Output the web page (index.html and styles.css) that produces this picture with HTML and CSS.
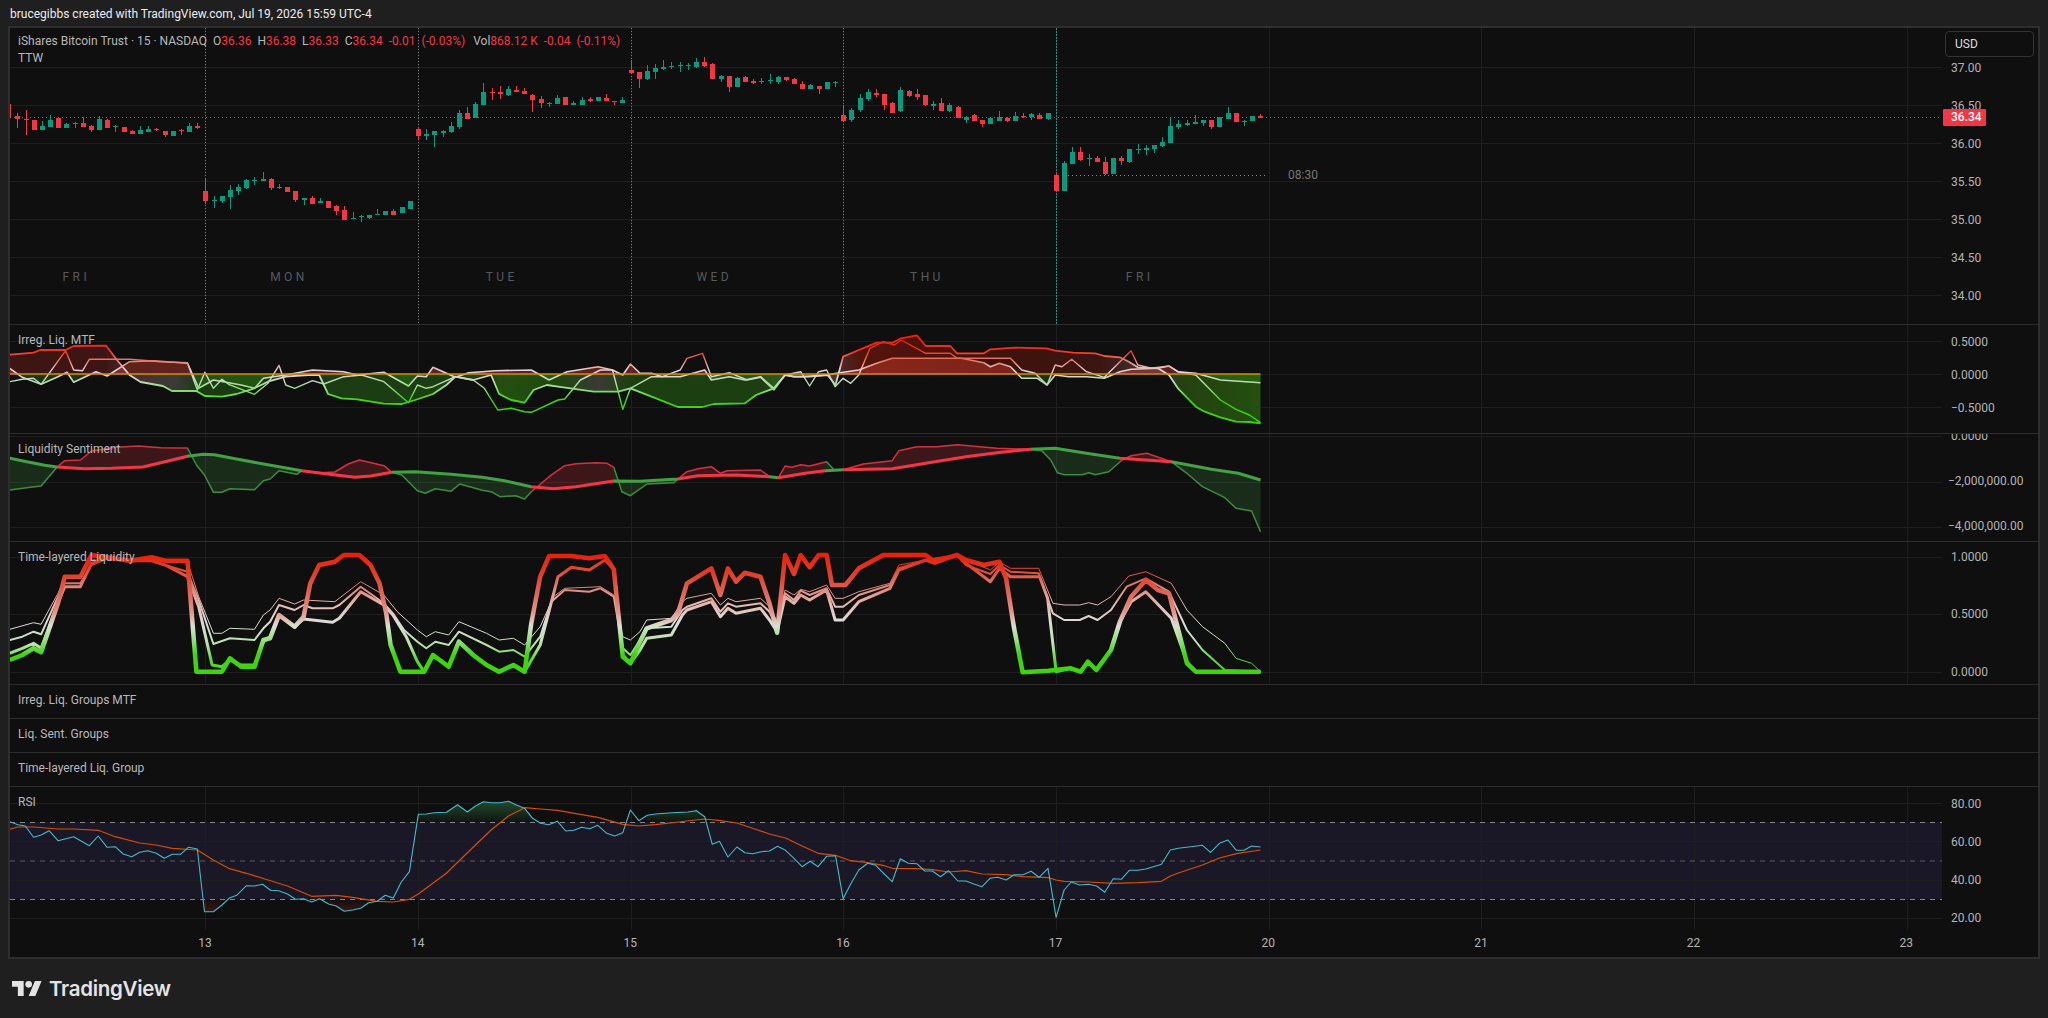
FILE: index.html
```html
<!DOCTYPE html>
<html lang="en">

<head>
  <meta charset="UTF-8">
  <meta name="viewport" content="width=device-width, initial-scale=1.0">
  <title>iShares Bitcoin Trust - TradingView</title>
  <link rel="stylesheet" href="styles.css">
</head>

<body>
  <div class="header">brucegibbs created with TradingView.com, Jul 19, 2026 15:59 UTC-4</div>

  <div class="chart">
    <div class="pane pane-main">
      <div class="plot">
        <svg id="main" class="plot-svg"></svg>
        <div class="legend">
          <div class="legend-row">
            <span class="symbol">iShares Bitcoin Trust · 15 · NASDAQ</span>
            <span class="ohlc">O<b>36.36</b></span>
            <span class="ohlc">H<b>36.38</b></span>
            <span class="ohlc">L<b>36.33</b></span>
            <span class="ohlc">C<b>36.34</b></span>
            <span class="ohlc"><b>-0.01</b></span>
            <span class="ohlc"><b>(-0.03%)</b></span>
            <span class="ohlc vol">Vol<b>868.12 K</b></span>
            <span class="ohlc"><b>-0.04</b></span>
            <span class="ohlc"><b>(-0.11%)</b></span>
          </div>
          <div class="legend-row">TTW</div>
        </div>
        <div class="days">
          <span>FRI</span>
          <span>MON</span>
          <span>TUE</span>
          <span>WED</span>
          <span>THU</span>
          <span>FRI</span>
        </div>
        <div class="open-time">08:30</div>
      </div>
      <div class="axis axis-main">
        <div class="tick">37.00</div>
        <div class="tick">36.50</div>
        <div class="tick">36.00</div>
        <div class="tick">35.50</div>
        <div class="tick">35.00</div>
        <div class="tick">34.50</div>
        <div class="tick">34.00</div>
        <div class="currency">USD</div>
        <div class="last-price">36.34</div>
      </div>
    </div>

    <div class="pane pane-irreg">
      <div class="plot">
        <svg id="irreg" class="plot-svg"></svg>
        <div class="pane-title">Irreg. Liq. MTF</div>
      </div>
      <div class="axis axis-irreg">
        <div class="tick">0.5000</div>
        <div class="tick">0.0000</div>
        <div class="tick">−0.5000</div>
      </div>
    </div>

    <div class="pane pane-sent">
      <div class="plot">
        <svg id="sent" class="plot-svg"></svg>
        <div class="pane-title">Liquidity Sentiment</div>
      </div>
      <div class="axis axis-sent">
        <div class="tick">0.0000</div>
        <div class="tick tick-wide">−2,000,000.00</div>
        <div class="tick tick-wide">−4,000,000.00</div>
      </div>
    </div>

    <div class="pane pane-layered">
      <div class="plot">
        <svg id="layered" class="plot-svg"></svg>
        <div class="pane-title">Time-layered Liquidity</div>
      </div>
      <div class="axis axis-layered">
        <div class="tick">1.0000</div>
        <div class="tick">0.5000</div>
        <div class="tick">0.0000</div>
      </div>
    </div>

    <div class="pane pane-group"><div class="pane-title">Irreg. Liq. Groups MTF</div></div>
    <div class="pane pane-group"><div class="pane-title">Liq. Sent. Groups</div></div>
    <div class="pane pane-group"><div class="pane-title">Time-layered Liq. Group</div></div>

    <div class="pane pane-rsi">
      <div class="plot">
        <svg id="rsi" class="plot-svg"></svg>
        <div class="pane-title">RSI</div>
      </div>
      <div class="axis axis-rsi">
        <div class="tick">80.00</div>
        <div class="tick">60.00</div>
        <div class="tick">40.00</div>
        <div class="tick">20.00</div>
      </div>
    </div>

    <div class="time-axis">
      <span>13</span>
      <span>14</span>
      <span>15</span>
      <span>16</span>
      <span>17</span>
      <span>20</span>
      <span>21</span>
      <span>22</span>
      <span>23</span>
    </div>
  </div>

  <div class="footer">
    <svg class="logo-mark" viewBox="0 0 36 18" aria-hidden="true">
      <path d="M14 18H7V7H0V0h14v18zM28 18h-8l7.5-18h8L28 18z"></path>
      <circle cx="20" cy="4" r="4"></circle>
    </svg>
    <span class="logo-text">TradingView</span>
  </div>

  <script src="chart.js"></script>
</body>

</html>
```

FILE: styles.css
```css
* {
  box-sizing: border-box;
}

body {
  margin: 0;
  height: 1018px;
  overflow: hidden;
  background: #1f1f1f;
  color: #b4b4b4;
  font-family: Roboto, "Liberation Sans", sans-serif;
  font-size: 12px;
}

.header {
  height: 26px;
  padding-left: 10px;
  line-height: 29px;
  font-size: 12px;
  color: #ececec;
}

.chart {
  margin: 0 8px;
  height: 933px;
  border: 2px solid #2e2e2e;
  background: #0f0f0f;
}

.pane {
  display: flex;
  position: relative;
  border-bottom: 1px solid #2e2e2e;
  overflow: hidden;
}

.pane-main {
  height: 297px;
}

.pane-irreg {
  height: 109px;
}

.pane-sent {
  height: 108px;
}

.pane-layered {
  height: 143px;
}

.pane-group {
  height: 34px;
}

.pane-rsi {
  height: 143px;
  border-bottom: none;
}

.plot {
  position: relative;
  width: 1932px;
  flex: none;
}

.plot-svg {
  display: block;
  width: 100%;
  height: 100%;
}

.pane-title {
  position: absolute;
  left: 8px;
  top: 6px;
  line-height: 18px;
  font-size: 12px;
  color: #b8b8b8;
}

/* legend and labels lying over the main chart */
.legend {
  position: absolute;
  left: 8px;
  top: 5px;
  line-height: 17px;
  color: #b8b8b8;
}

.legend-row {
  display: flex;
}

.symbol {
  margin-right: 6px;
}

.ohlc {
  margin-right: 6px;
}

.ohlc b {
  font-weight: 400;
  color: #f23645;
}

.vol {
  margin-left: 2px;
}

.days {
  position: absolute;
  left: -40px;
  top: 240px;
  display: flex;
  font-size: 12px;
  line-height: 18px;
  letter-spacing: 3.4px;
  color: #555a60;
}

.days span {
  width: 212.67px;
  text-align: center;
}

.open-time {
  position: absolute;
  left: 1278px;
  top: 138px;
  line-height: 18px;
  color: #777777;
}

.axis {
  position: relative;
  flex: 1;
  padding-left: 9px;
  font-size: 12px;
  color: #b4b4b4;
}

.axis-main {
  padding-top: 21px;
}

.axis-main .tick {
  height: 38px;
  line-height: 38px;
}

.axis-irreg {
  padding-top: 1px;
}

.axis-irreg .tick {
  height: 33px;
  line-height: 33px;
}

.axis-sent {
  margin-top: -20px;
}

.axis-sent .tick {
  height: 45px;
  line-height: 45px;
}

.tick-wide {
  margin-left: -3px;
}

.axis-layered {
  margin-top: -13.5px;
}

.axis-layered .tick {
  height: 57.5px;
  line-height: 57.5px;
}

.axis-rsi {
  margin-top: -2.5px;
}

.axis-rsi .tick {
  height: 38.2px;
  line-height: 38.2px;
}

.currency {
  position: absolute;
  left: 3px;
  top: 3px;
  width: 89px;
  height: 26px;
  padding-left: 9px;
  line-height: 25px;
  border: 1px solid #333333;
  border-radius: 4px;
  background: #0f0f0f;
  color: #dddddd;
}

.last-price {
  position: absolute;
  left: 1px;
  top: 81px;
  width: 43px;
  height: 17px;
  padding-left: 8px;
  line-height: 17px;
  border-radius: 1px;
  background: #f23645;
  color: #ffffff;
  font-weight: 500;
}

.time-axis {
  display: flex;
  height: 27px;
  padding-left: 88.67px;
  line-height: 26px;
  font-size: 12px;
  color: #b4b4b4;
}

.time-axis span {
  width: 212.67px;
  text-align: center;
}

.footer {
  display: flex;
  align-items: center;
  gap: 7px;
  height: 59px;
  padding: 0 0 0 12px;
}

.logo-mark {
  width: 30px;
  height: 15px;
  fill: #e4e4e4;
  margin-top: -1px;
}

.logo-text {
  font-family: Inter, sans-serif;
  font-size: 20.5px;
  font-weight: 600;
  color: #e4e4e4;
  letter-spacing: -0.3px;
}
```

FILE: chart.js
```javascript
const NS = "http://www.w3.org/2000/svg";
const GREEN = "#089981";
const RED = "#f23645";
const GRID = "#1e1e1e";

const DAY_X = [205.4, 418, 630.7, 843.3, 1056, 1268.7, 1481.3, 1694, 1907];
const LEFT = 10;
const RIGHT = 1942;
const LAST_X = 1260.5;

// series were read off enlarged crops of the chart: x at 2.24x, y at 3x
const scaleX = 2.24;
const scaleY = 3;
const CROP_A = { x: 0, y: 320 };
const CROP_B = { x: 640, y: 320 };
const CROP_C = { x: 0, y: 680 };
const CROP_D = { x: 640, y: 760 };

function pts(crop, str) {
    return str.trim().split(/\s+/).map((p) => {
        const [x, y] = p.split(",").map(Number);
        return [crop.x + x / scaleX, crop.y + y / scaleY];
    });
}

function add(parent, tag, attrs) {
    const el = document.createElementNS(NS, tag);
    for (const k in attrs) {
        el.setAttribute(k, attrs[k]);
    }
    parent.appendChild(el);
    return el;
}

function setup(id, top, bottom) {
    const svg = document.getElementById(id);
    svg.setAttribute("viewBox", `${LEFT} ${top} ${RIGHT - LEFT} ${bottom - top}`);
    svg.setAttribute("preserveAspectRatio", "none");
    svg.defs = add(svg, "defs", {});
    svg.top = top;
    svg.bottom = bottom;
    return svg;
}

function grid(svg, rows, verticals) {
    rows.forEach((y) => {
        add(svg, "line", { x1: LEFT, x2: RIGHT, y1: y + 0.5, y2: y + 0.5, stroke: GRID });
    });
    if (verticals) {
        DAY_X.forEach((x) => {
            const px = Math.round(x) + 0.5;
            add(svg, "line", { x1: px, x2: px, y1: svg.top, y2: svg.bottom, stroke: GRID });
        });
    }
}

// gradient in page coordinates; stops are [position, colour]
let gradId = 0;
function gradient(svg, axis, stops) {
    const from = stops[0][0];
    const to = stops[stops.length - 1][0];
    const id = "g" + gradId++;
    const attrs = { id, gradientUnits: "userSpaceOnUse", x1: 0, x2: 0, y1: 0, y2: 0 };
    attrs[axis + "1"] = from;
    attrs[axis + "2"] = to;
    const g = add(svg.defs, "linearGradient", attrs);
    stops.forEach(([pos, color, opacity]) => {
        add(g, "stop", {
            offset: (pos - from) / (to - from),
            "stop-color": color,
            "stop-opacity": opacity === undefined ? 1 : opacity,
        });
    });
    return `url(#${id})`;
}

function toPoints(list) {
    return list.map((p) => p[0].toFixed(1) + "," + p[1].toFixed(1)).join(" ");
}

function line(svg, list, stroke, width, opacity) {
    add(svg, "polyline", {
        points: toPoints(list),
        fill: "none",
        stroke,
        "stroke-width": width,
        "stroke-linejoin": "round",
        opacity: opacity === undefined ? 1 : opacity,
    });
}

function area(svg, list, fill, opacity) {
    add(svg, "polygon", {
        points: toPoints(list),
        fill,
        opacity: opacity === undefined ? 1 : opacity,
    });
}

/* ---------- main pane ---------- */

// each candle: colour, body top, body bottom, wick top, wick bottom (y at 3x)
const CANDLES = `
r348,358,340,384 r356,358,330,404 r360,390,360,390 g378,390,364,390 g360,381,346,381 r354,384,354,384
g372,384,368,384 g369,373,366,384 r369,381,352,381 r378,390,375,396 g357,390,349,390 r360,384,356,384
g378,380,376,396 r381,396,381,396 r393,402,390,402 g390,402,378,402 g387,396,378,396 r386,390,383,393
r393,405,393,411 g393,408,393,408 r390,393,387,404 g378,396,369,396 r378,384,369,387
r573,603,537,612 g600,603,588,624 g588,603,588,609 g570,591,555,627 g561,573,552,585 g540,564,537,567
g539,542,531,555 g537,543,516,543 r537,564,534,570 r561,564,552,567 r561,576,561,576 r573,600,573,606
g594,600,594,615 r594,612,588,612 g603,609,594,609 r603,624,603,624 r618,633,615,645 r630,660,618,660
g654,656,636,657 g649,651,645,666 g645,654,645,657 g642,645,627,645 g633,645,633,645 r633,645,627,645
g621,639,621,639 g603,627,603,627
r387,408,381,417 g402,407,387,420 g393,405,393,441 g393,399,390,411 g378,396,366,399 g339,381,330,387
r339,357,321,357 g312,354,306,354 g276,315,249,315 r276,279,264,300 r276,282,258,297 g267,285,258,288
r270,276,258,276 r273,282,264,282 r285,300,282,336 r297,309,288,324 g309,312,306,321 g294,312,285,312
r291,315,291,315 g309,315,303,315 g300,315,291,315 r297,303,291,306 g291,303,291,303 r294,303,282,303
r303,306,303,315 g300,309,291,309
r210,219,180,219 r216,237,216,264 g213,237,195,240 g204,216,192,237 g201,207,180,210 g198,201,186,207
g195,198,186,216 g195,198,189,210 g186,201,174,204 r186,198,171,201 r192,237,189,237 g228,237,225,246
r228,261,228,276 g234,261,231,261 r231,246,228,246 r243,249,237,252 g243,246,234,252 g240,243,222,252
g231,246,228,252 r231,240,231,243 r237,252,234,252 r252,267,243,267 g255,267,252,267 r258,267,258,282
g246,267,246,267 g245,247,243,261
r345,363,315,363 g330,360,324,366 g294,330,282,336 g276,297,267,303 r279,285,267,291 r282,315,282,330
r309,339,306,339 g270,333,261,336 r273,288,270,291 r282,291,267,300 r285,315,285,318 g312,318,303,330
r309,333,294,333 g315,333,309,336 r321,354,318,354 g351,360,348,369 r345,363,342,363 r360,372,360,381
g354,372,354,372 g351,363,333,363 r354,363,351,366 g348,363,336,363 r348,351,339,354 g342,351,339,360
r345,357,339,357 g339,357,339,360
r525,573,516,573 g489,573,483,573 g456,492,441,492 r456,480,441,483 g474,477,462,498 r474,486,468,486
r486,522,471,525 g474,522,474,522 r474,483,468,495 g447,486,447,489 g447,450,432,462 g444,450,435,465
g435,447,435,459 g426,438,411,441 g378,429,351,429 g372,381,360,387 g369,375,360,378 g366,372,345,372
g360,369,360,378 r360,381,360,387 g351,381,351,381 g339,357,321,357 r339,366,339,366 g363,365,360,378
g348,363,348,363 r348,354,342,354`;

function drawCandles(svg) {
    const list = CANDLES.trim().split(/\s+/);
    const step = (DAY_X[1] - DAY_X[0]) / 26;
    list.forEach((c, i) => {
        const color = c[0] === "g" ? GREEN : RED;
        const [top, bottom, high, low] = c.slice(1).split(",").map((v) => Number(v) / scaleY);
        const x = Math.round(DAY_X[0] + (i - 23) * step);
        add(svg, "rect", {
            x, y: high, width: 1, height: low - high, fill: color, "shape-rendering": "crispEdges",
        });
        add(svg, "rect", {
            x: x - 2, y: top, width: 5, height: Math.max(bottom - top, 1), fill: color, "shape-rendering": "crispEdges",
        });
    });
}

function drawMain() {
    const svg = setup("main", 28, 324);
    grid(svg, [67, 105, 143, 181, 219, 257, 295], true);

    for (let i = 0; i < 4; i++) {
        const x = Math.round(DAY_X[i]) + 0.5;
        add(svg, "line", { x1: x, x2: x, y1: 28, y2: 324, stroke: "#7d7d7d", "stroke-dasharray": "1 2" });
    }
    const t = Math.round(DAY_X[4]) + 0.5;
    add(svg, "line", { x1: t, x2: t, y1: 28, y2: 324, stroke: "#2f8f90", "stroke-dasharray": "2 1" });

    add(svg, "line", { x1: LEFT, x2: RIGHT - 2, y1: 117.5, y2: 117.5, stroke: RED, "stroke-dasharray": "1 3" });
    add(svg, "line", { x1: 1068, x2: 1267, y1: 175.5, y2: 175.5, stroke: "#8a8a8a", "stroke-dasharray": "1 3" });
    add(svg, "rect", { x: LEFT, y: 104, width: 1, height: 14, fill: RED });

    drawCandles(svg);
}

/* ---------- irregular liquidity pane ---------- */

const IRREG_A = pts(CROP_A, `22,104 50,101 75,98 90,90 147,90 165,78 238,77 262,120 290,165 315,186 365,198 385,213
    440,213 459,228 497,230 530,222 570,205 600,185 640,170 690,165 715,165 735,222 765,235 800,238 860,251 900,252
    930,240 970,222 1000,195 1020,170 1060,180 1100,165 1118,222 1145,240 1175,248 1195,210 1225,195 1250,200
    1330,215 1385,215 1412,205`).concat(pts(CROP_B, `26,230 85,261 140,261 165,252 235,250 260,225 300,205 325,165
    345,170 365,170 380,170 420,165 438,195 455,110 490,90 530,68 565,68 585,55 620,46 640,78 695,78 710,100 770,100
    785,88 840,83 910,85 930,92 970,98 1020,100 1040,108 1075,112 1095,125 1115,142 1160,145 1185,165 1205,205
    1245,260 1265,275 1300,292 1335,305 1365,306 1390,310`));

const IRREG_B = pts(CROP_A, `22,185 50,178 75,175 92,193 147,92 165,150 185,152 200,118 290,118 360,125 420,128
    442,210 459,157 478,205 497,178 512,193 570,223 600,190 625,136 640,195 660,205 700,182 725,192 770,170 810,165
    860,185 915,248 935,195 955,205 970,200 1020,170 1060,180 1085,205 1115,270 1145,265 1175,275 1190,277 1250,240
    1265,237 1300,180 1345,150 1372,150 1395,268 1412,205`).concat(pts(CROP_B, `26,170 50,170 90,150 105,115 140,100
    160,170 200,158 240,180 270,172 300,210 325,165 360,155 380,198 400,155 418,150 437,200 455,175 472,190 490,165
    515,85 545,65 570,75 585,60 640,100 695,100 710,115 785,115 830,115 855,150 885,160 912,195 930,135 945,140
    967,118 1000,155 1040,172 1100,92 1115,135 1145,145 1185,138 1205,155 1245,165 1300,240 1335,268 1365,285
    1390,308`));

const IRREG_C = pts(CROP_A, `22,145 50,172 92,193 130,170 150,157 165,187 215,155 240,168 290,125 345,122 420,130
    445,205 478,180 540,195 570,205 590,175 640,165 700,150 770,155 800,165 860,157 915,198 935,168 955,170 970,142
    1020,172 1050,158 1110,152 1190,150 1230,180 1270,155 1340,140 1372,150 1395,165 1412,132`).concat(pts(CROP_B,
    `0,160 26,160 50,170 90,170 145,150 160,180 200,170 235,180 270,170 300,205 325,165 345,170 365,170 420,165 440,160
    490,150 530,130 565,115 690,115 720,115 770,128 785,140 805,130 830,140 855,175 890,175 912,195 930,165 960,170
    1000,170 1040,175 1075,155 1100,148 1160,145 1185,138 1205,155 1245,160 1300,180 1390,188`));

function drawIrreg() {
    const svg = setup("irreg", 325, 433);
    grid(svg, [341, 374, 407], true);

    const base = 374;
    const close = (list) => list.concat([[list[list.length - 1][0], base], [list[0][0], base]]);

    const fillA = gradient(svg, "x", [
        [10, "#3d1613"], [105, "#3d1613"], [135, "#483030"], [175, "#3a3a3a"], [200, "#1a3a12"], [490, "#1c3f12"],
        [500, "#23500f"], [560, "#1f4710"], [600, "#3a3a36"], [630, "#1c3f12"], [760, "#1c3f12"], [790, "#33402f"],
        [830, "#3f3a38"], [860, "#55140c"], [1000, "#40120c"], [1100, "#3a1512"], [1130, "#3f2a28"], [1160, "#333333"],
        [1185, "#23420f"], [1261, "#23500f"],
    ]);
    area(svg, close(IRREG_A), fillA);

    const fillB = gradient(svg, "y", [
        [340, "#d8402c", 0.4], [base, "#d8402c", 0.4], [base, "#2f8f1a", 0.3], [420, "#2f8f1a", 0.3],
    ]);
    area(svg, close(IRREG_C), fillB);

    const byValue = gradient(svg, "y", [
        [340, "#f2200a"], [352, "#ee3a22"], [362, "#e8867a"], [370, "#e4d4d2"], [377, "#d4d4d4"], [387, "#9fe08a"],
        [400, "#3cd80e"], [424, "#33d60a"],
    ]);
    line(svg, IRREG_C, byValue, 1.6);
    line(svg, IRREG_B, byValue, 1.4);
    line(svg, IRREG_A, byValue, 1.8);

    add(svg, "line", { x1: LEFT, x2: LAST_X, y1: base, y2: base, stroke: "#e08a00", "stroke-width": 1.6 });
}

/* ---------- liquidity sentiment pane ---------- */

const SENT_AVG = pts(CROP_A, `22,415 60,425 100,436 128,441 190,446 250,445 320,441 360,428 420,409 455,403 480,404
    530,417 590,432 676,452 720,460 795,472 830,468 878,457 930,455 1010,463 1080,472 1130,482 1190,500 1240,506
    1290,500 1375,483`).concat(pts(CROP_B, `0,484 85,477 130,467 215,465 290,470 310,473 370,460 415,452 455,449
    565,446 640,430 730,410 800,398 875,388 930,385 1000,400 1075,415 1190,425 1280,448 1340,460 1390,480`));

const SENT_LINE = pts(CROP_A, `22,510 60,503 92,498 128,441 145,422 180,420 205,393 260,382 310,378 360,383 420,384
    440,435 458,465 478,517 497,517 515,506 570,509 590,482 605,477 625,452 665,463 676,452 720,458 750,456 780,432
    805,420 860,437 878,457 900,465 935,512 953,520 975,506 1010,514 1030,492 1080,511 1100,515 1120,530 1155,527
    1175,537 1190,515 1230,470 1265,437 1290,431 1335,428 1360,430 1375,442 1393,515 1412,527`).concat(pts(CROP_B,
    `16,492 76,488 85,477 105,455 130,446 160,440 180,460 195,452 270,450 290,470 310,473 325,438 340,442 360,434
    380,438 418,425 435,450 455,449 500,432 565,422 580,392 620,380 665,380 710,374 800,385 875,388 900,392 920,420
    935,458 950,464 990,464 1005,458 1020,464 1050,455 1080,420 1100,407 1135,400 1190,425 1225,460 1260,500 1310,533
    1335,565 1370,573 1390,635`));

function drawSent() {
    const svg = setup("sent", 434, 541);
    grid(svg, [436, 482, 527], true);

    const switches = [57, 187.5, 302, 392, 531, 614, 678, 769.5, 778, 825, 843, 1030.6, 1120, 1171];
    const stops = [[10, "#43a047"]];
    let color = "#43a047";
    switches.forEach((x) => {
        stops.push([x, color]);
        color = color === "#43a047" ? "#f23645" : "#43a047";
        stops.push([x, color]);
    });
    stops.push([LAST_X, color]);
    const paint = gradient(svg, "x", stops);

    area(svg, SENT_LINE.concat(SENT_AVG.slice().reverse()), paint, 0.2);
    line(svg, SENT_LINE, paint, 1.5, 0.85);
    line(svg, SENT_AVG, paint, 3);
}

/* ---------- time-layered pane ---------- */

const LAYER_1 = pts(CROP_A, `22,1020 50,1005 75,985 92,997 130,850 145,770 180,770 205,705 240,712 290,722 340,712
    370,722 420,722 440,1055 497,1055 515,1015 540,1040 570,1040 590,960 605,955 625,885 660,920 680,890 695,790
    715,735 750,725 770,705 805,705 830,735 850,790 865,880 875,975 897,1055 950,1055 970,1005 1005,1040 1028,965
    1060,1005 1090,1035 1118,1055 1150,1035 1175,1055 1190,910 1210,770 1230,708 1280,708 1320,715 1355,708 1375,748
    1395,1010 1412,1030`).concat(pts(CROP_B, `0,965 15,925 70,900 85,880 105,790 160,745 180,825 197,745 215,785
    235,758 270,770 290,850 307,938 325,705 345,762 360,705 380,742 400,705 418,705 430,795 460,795 490,745 545,705
    640,705 660,725 710,705 730,720 770,735 805,725 820,775 838,925 857,1057 915,1052 965,1045 987,1055 1003,1025
    1022,1050 1055,990 1075,905 1100,830 1133,780 1160,810 1185,820 1205,925 1225,1030 1245,1055 1390,1055`));

const LAYER_2 = pts(CROP_A, `22,1000 50,985 75,970 92,985 130,850 145,800 180,800 205,730 240,715 290,722 340,722
    370,735 420,770 445,860 475,1035 497,1040 515,1020 540,1035 570,1035 590,965 605,950 625,885 660,920 680,897
    700,900 745,907 760,895 808,815 860,855 880,885 910,950 935,1025 950,1055 970,1005 1005,1040 1028,965 1060,1005
    1090,1035 1118,1055 1150,1035 1175,1055 1210,975 1250,770 1280,742 1320,750 1355,720 1375,748 1395,1005
    1412,1030`).concat(pts(CROP_B, `0,990 15,955 70,945 95,885 105,870 160,845 180,890 197,865 215,880 270,865 290,900
    307,935 325,830 345,850 360,825 380,840 418,810 437,900 455,900 490,845 560,805 580,750 640,720 660,730 710,705
    730,730 785,785 805,745 830,770 895,770 913,835 932,1055 965,1045 987,1055 1003,1025 1022,1050 1055,990 1075,905
    1100,845 1133,815 1190,895 1225,1025 1245,1055 1390,1055`));

const LAYER_3 = pts(CROP_A, `22,960 50,950 75,935 92,943 130,830 145,790 180,790 205,735 240,715 290,722 340,722
    370,735 420,755 445,840 478,972 515,955 570,960 590,925 605,905 625,855 660,870 680,855 700,865 745,865 760,855
    808,800 860,850 880,880 905,930 935,965 955,985 975,965 1005,975 1028,935 1090,975 1118,995 1150,990 1175,1010
    1210,950 1235,845 1265,810 1320,815 1345,805 1375,830 1395,985 1412,1005`).concat(pts(CROP_B, `0,960 15,925 70,920
    95,870 105,860 160,835 180,875 197,850 215,860 270,850 290,875 307,920 325,820 345,840 360,812 380,825 418,805
    437,860 455,860 490,825 560,795 580,745 640,720 710,705 730,735 785,762 805,735 830,755 893,760 925,880 950,900
    985,900 1005,888 1025,900 1055,870 1090,800 1133,775 1185,815 1225,930 1260,990 1310,1050 1390,1055`));

const LAYER_4 = pts(CROP_A, `22,928 75,908 92,913 130,820 145,775 180,770 205,720 240,712 290,722 340,716 370,725
    420,725 445,830 478,940 497,940 515,925 570,928 590,885 605,870 625,835 660,852 680,840 750,845 808,785 860,825
    890,875 935,930 955,950 975,935 1005,945 1028,905 1090,940 1118,960 1150,955 1175,975 1210,920 1240,830 1265,805
    1345,800 1375,825 1395,950 1412,960`).concat(pts(CROP_B, `0,935 15,900 70,895 95,845 105,835 160,820 180,855
    197,835 215,845 270,835 290,860 307,905 325,810 345,825 360,808 380,815 418,795 437,835 455,835 490,815 560,790
    580,735 640,720 710,705 730,720 785,750 805,725 830,745 893,745 925,850 950,855 985,855 1005,848 1025,855 1055,830
    1095,768 1133,755 1190,790 1225,870 1260,920 1310,970 1335,1015 1370,1030 1390,1055`));

function drawLayered() {
    const svg = setup("layered", 542, 684);
    grid(svg, [557, 614, 672], true);

    // the widest line stays red further down the pane than the thin ones
    const strong = gradient(svg, "y", [
        [555, "#e8200a"], [575, "#e0402c"], [595, "#de6a5c"], [612, "#e4958a"], [626, "#d8e0d0"], [640, "#96e07e"],
        [655, "#3ed40f"], [676, "#3ed40f"],
    ]);
    const soft = gradient(svg, "y", [
        [555, "#e8200a"], [572, "#e0503a"], [590, "#e08c80"], [605, "#e4bab2"], [622, "#dedcd8"], [645, "#b8e4aa"],
        [660, "#5cd838"], [676, "#3ed40f"],
    ]);
    line(svg, LAYER_4, soft, 1);
    line(svg, LAYER_3, soft, 2);
    line(svg, LAYER_2, soft, 3);
    line(svg, LAYER_1, strong, 4.5);
}

/* ---------- RSI pane ---------- */

const RSI_LINE = pts(CROP_C, `22,425 40,434 57,438 75,472 92,465 110,452 130,482 165,470 200,497 220,468 240,502
    258,500 276,522 295,530 313,517 331,512 350,520 368,535 386,523 404,523 422,502 442,507 458,695 478,695 497,675
    514,654 530,646 552,617 570,618 588,613 606,631 624,632 644,642 662,658 680,656 698,666 716,656 736,672 753,678
    771,694 790,690 808,685 826,668 845,664 863,646 881,654 899,606 917,575 937,403 955,402 973,398 1000,397 1025,374
    1047,396 1065,378 1083,365 1100,368 1120,368 1139,364 1157,375 1175,385 1193,415 1211,430 1229,434 1249,424
    1267,453 1285,451 1303,442 1321,446 1339,436 1359,460 1377,468 1395,458 1412,390 1431,422 1450,406 1468,402
    1505,398 1541,396 1560,392`).concat(pts(CROP_D, `125,151 145,170 162,253 178,244 197,291 217,261 235,278 252,281
    272,275 290,273 308,259 326,271 345,295 363,320 381,304 399,320 418,289 438,287 455,416 472,372 490,330 510,310
    528,316 547,342 565,365 583,296 601,310 620,311 638,333 655,333 673,350 691,332 712,363 730,363 748,372 766,380
    784,355 802,352 820,360 838,344 858,344 876,334 894,352 914,325 932,472 950,390 966,366 985,375 1005,373 1023,378
    1041,397 1060,356 1078,358 1096,331 1115,331 1133,327 1150,320 1168,313 1188,270 1206,265 1260,256 1278,277
    1298,250 1317,240 1336,271 1353,271 1370,258 1390,261`));

const RSI_AVG = pts(CROP_C, `22,448 40,441 75,441 130,447 165,447 220,451 258,470 313,489 350,495 386,505 442,510
    478,540 514,566 552,580 606,602 644,618 698,649 753,646 790,652 845,664 881,666 917,658 937,642 1000,580 1047,518
    1100,450 1139,408 1175,383 1211,387 1249,391 1303,404 1339,412 1395,433 1431,438 1468,434 1520,426`).concat(
    pts(CROP_D, `105,183 145,177 180,182 217,189 252,205 290,222 326,234 363,258 399,280 438,286 472,302 510,308
    547,317 565,325 620,326 655,329 691,336 730,332 766,342 820,344 858,350 914,353 932,360 950,364 1005,366 1060,370
    1115,368 1168,364 1188,348 1206,339 1260,315 1298,294 1336,281 1390,270`));

function drawRsi() {
    const svg = setup("rsi", 787, 930);
    add(svg, "rect", { x: LEFT, y: 822, width: RIGHT - LEFT, height: 77.5, fill: "#1a1726" });
    grid(svg, [803, 841, 880, 918], true);

    const over = gradient(svg, "y", [[803, "#21452a"], [822, "#21452a", 0.1]]);
    area(svg, pts(CROP_C, `937,427 937,403 955,402 973,398 1000,397 1025,374 1047,396 1065,378 1083,365 1100,368 1120,368
        1139,364 1157,375 1175,385 1193,415 1200,427`), over);
    area(svg, pts(CROP_C, `1445,427 1450,406 1468,402 1505,398 1541,396 1560,392`).concat(
        pts(CROP_D, "125,151 145,170 150,187")), over);

    const under = gradient(svg, "y", [[899, "#3a1518", 0.1], [912, "#3a1518"]]);
    area(svg, pts(CROP_C, "455,658 458,695 478,695 500,658"), under);
    area(svg, pts(CROP_C, "728,658 736,672 753,678 771,694 790,690 808,685 826,668 840,658"), under);

    [[822.5, "#868686"], [861, "#5c5c5c"], [899.5, "#868686"]].forEach(([y, stroke]) => {
        add(svg, "line", { x1: LEFT, x2: RIGHT, y1: y, y2: y, stroke, "stroke-dasharray": "5 5" });
    });

    line(svg, RSI_AVG, "#d84f00", 1.2);
    line(svg, RSI_LINE, "#42bccc", 1.1);
}

drawMain();
drawIrreg();
drawSent();
drawLayered();
drawRsi();
```
